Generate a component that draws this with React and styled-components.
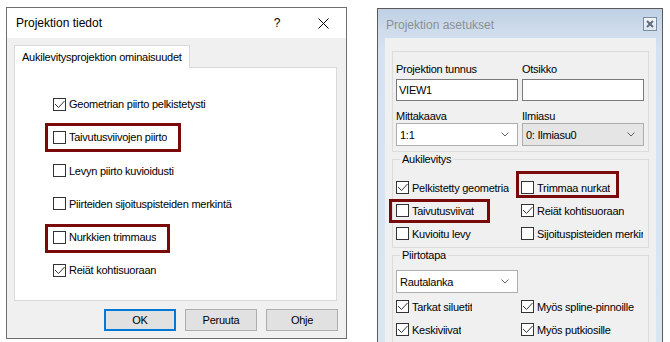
import React from 'react';
import styled, { createGlobalStyle } from 'styled-components';

const GlobalStyle = createGlobalStyle`
  html, body {
    margin: 0;
    padding: 0;
    background: #fff;
    overflow: hidden;
  }
  body {
    font-family: "Liberation Sans", Arial, sans-serif;
    font-size: 11px;
    letter-spacing: -0.25px;
    color: #000;
  }
`;

const Desktop = styled.div`
  display: flex;
  align-items: flex-start;
  gap: 30px;
  padding: 7px 0 0 6px;
  height: 342px;
  box-sizing: border-box;
`;

/* ---------- Windows 10 dialog (left) ---------- */

const Dialog = styled.section`
  width: 341px;
  height: 332px;
  box-sizing: border-box;
  border: 1px solid #6f6f6f;
  background: #f0f0f0;
  display: flex;
  flex-direction: column;
`;

const TitleBar = styled.header`
  height: 30px;
  background: #fff;
  display: flex;
  align-items: center;
  padding-left: 9px;
`;

const TitleText = styled.div`
  flex: 1;
  font-size: 12px;
  letter-spacing: 0;
`;

const CaptionButton = styled.div`
  width: 46px;
  height: 30px;
  display: flex;
  align-items: center;
  justify-content: center;
  font-size: 12px;
`;

const DialogBody = styled.div`
  flex: 1;
  display: flex;
  flex-direction: column;
  padding: 7px 9px 0 7px;
`;

const TabStrip = styled.div`
  display: flex;
`;

const Tab = styled.div`
  position: relative;
  z-index: 1;
  width: 176px;
  height: 23px;
  box-sizing: border-box;
  margin-bottom: -1px;
  padding: 0 7px;
  display: flex;
  align-items: center;
  background: #fff;
  border: 1px solid #d9d9d9;
  border-bottom: none;
  white-space: nowrap;
`;

const TabPanel = styled.div`
  height: 234px;
  box-sizing: border-box;
  background: #fff;
  border: 1px solid #d9d9d9;
  padding: 28px 0 0 38px;
  display: flex;
  flex-direction: column;
  align-items: flex-start;
  gap: 17.3px;
`;

const CheckRow = styled.label`
  position: relative;
  display: inline-flex;
  align-items: center;
  gap: 3px;
  height: ${(p) => p.$h || 16}px;
  max-width: ${(p) => p.$max || 300}px;
  white-space: nowrap;

  span {
    overflow: hidden;
  }

  ${(p) =>
    p.$mark &&
    `
    &::after {
      content: '';
      position: absolute;
      left: ${p.$mark.l}px;
      top: ${p.$mark.t}px;
      width: ${p.$mark.w}px;
      height: ${p.$mark.h}px;
      box-sizing: border-box;
      border: 3px solid #7a0a0a;
      pointer-events: none;
    }
  `}
`;

const Box = styled.span`
  flex: none;
  width: 13px;
  height: 13px;
  box-sizing: border-box;
  border: 1px solid #333;
  background: #fff;
  display: flex;
  align-items: center;
  justify-content: center;
`;

const ButtonRow = styled.div`
  display: flex;
  justify-content: flex-end;
  gap: 9px;
  margin-top: 8px;
  margin-right: -1px;
`;

const Button = styled.button`
  width: 72px;
  height: 22px;
  box-sizing: border-box;
  font: inherit;
  letter-spacing: inherit;
  color: #000;
  background: #e1e1e1;
  border: ${(p) => (p.$primary ? '2px solid #0078d7' : '1px solid #adadad')};
  padding: 0;
`;

/* ---------- Windows 7 basic dialog (right) ---------- */

const ClassicWindow = styled.section`
  width: 286px;
  height: 345px;
  box-sizing: border-box;
  margin-top: 1px;
  border: 1px solid #5b5b5b;
  background: linear-gradient(#bfd0e4 0px, #cddbeb 20px, #d6e2f0 40px, #dbe6f3 100%);
  display: flex;
  flex-direction: column;
`;

const ClassicTitle = styled.header`
  height: 29px;
  display: flex;
  align-items: center;
  padding: 0 5px 0 8px;
`;

const ClassicTitleText = styled.div`
  flex: 1;
  font-size: 12px;
  letter-spacing: 0;
  color: #8a8f96;
  padding-top: 2px;
`;

const ClassicClose = styled.div`
  width: 14px;
  height: 14px;
  box-sizing: border-box;
  border: 1px solid #7d8c9e;
  background: linear-gradient(#f3f6fa, #dfe7f1);
  display: flex;
  align-items: center;
  justify-content: center;
`;

const ClientArea = styled.div`
  flex: 1;
  margin: 0 6px 0 7px;
  background: #f0f0f0;
  padding: 13px 7px 0 7px;
  display: flex;
  flex-direction: column;
`;

const GroupBox = styled.fieldset`
  margin: 0;
  min-inline-size: 0;
  border: 1px solid #dcdcdc;
  padding: ${(p) => p.$pad};

  legend {
    padding: 0 2px;
    margin-left: 4px;
    line-height: 14px;
  }
`;

const FieldGrid = styled.div`
  display: grid;
  grid-template-columns: 122px 122px;
  column-gap: 4px;
`;

const FieldLabel = styled.div`
  line-height: 14px;
  margin-top: ${(p) => p.$top || 0}px;
  margin-bottom: ${(p) => p.$bottom || 0}px;
`;

const TextInput = styled.div`
  height: 22px;
  box-sizing: border-box;
  border: 1px solid #7a7a7a;
  background: #fff;
  padding: 0 2px;
  display: flex;
  align-items: center;
`;

const Combo = styled.div`
  width: 122px;
  height: 23px;
  box-sizing: border-box;
  border: 1px solid #adadad;
  background: ${(p) => (p.$readonly ? '#e5e5e5' : '#fff')};
  padding: 0 8px 0 3px;
  margin-bottom: ${(p) => p.$gap || 0}px;
  display: flex;
  align-items: center;
  justify-content: space-between;
`;

const CheckGrid = styled.div`
  display: grid;
  grid-template-columns: 122px 122px;
  column-gap: 3px;
  grid-auto-rows: 23px;
  align-items: center;
`;

const Check = () => (
  <svg width="11" height="11" viewBox="0 0 11 11">
    <path d="M1 5 L4.5 8.5 L10.5 2" fill="none" stroke="#333" strokeWidth="1" />
  </svg>
);

const Chevron = () => (
  <svg width="8" height="5" viewBox="0 0 8 5">
    <path d="M0.5 0.5 L4 4 L7.5 0.5" fill="none" stroke="#606060" strokeWidth="1" />
  </svg>
);

const CheckItem = ({ checked, label, mark, h, max }) => (
  <CheckRow $mark={mark} $h={h} $max={max}>
    <Box>{checked && <Check />}</Box>
    <span>{label}</span>
  </CheckRow>
);

const leftItems = [
  { label: 'Geometrian piirto pelkistetysti', checked: true },
  { label: 'Taivutusviivojen piirto', mark: { l: -8, t: -6.5, w: 136, h: 29 } },
  { label: 'Levyn piirto kuvioidusti' },
  { label: 'Piirteiden sijoituspisteiden merkintä' },
  { label: 'Nurkkien trimmaus', mark: { l: -8, t: -5.5, w: 125, h: 29 } },
  { label: 'Reiät kohtisuoraan', checked: true },
];

const unfoldItems = [
  { label: 'Pelkistetty geometria', checked: true },
  { label: 'Trimmaa nurkat', mark: { l: -5, t: -5.5, w: 103, h: 27 } },
  { label: 'Taivutusviivat', mark: { l: -7, t: -0.5, w: 101, h: 24 } },
  { label: 'Reiät kohtisuoraan', checked: true },
  { label: 'Kuvioitu levy' },
  { label: 'Sijoituspisteiden merkintä' },
];

const drawItems = [
  { label: 'Tarkat siluetit', checked: true },
  { label: 'Myös spline-pinnoille', checked: true },
  { label: 'Keskiviivat', checked: true },
  { label: 'Myös putkiosille', checked: true },
];

export default function App() {
  return (
    <>
      <GlobalStyle />
      <Desktop>
        <Dialog>
          <TitleBar>
            <TitleText>Projektion tiedot</TitleText>
            <CaptionButton>?</CaptionButton>
            <CaptionButton>
              <svg width="11" height="11" viewBox="0 0 11 11">
                <path d="M0.5 0.5 L10.5 10.5 M10.5 0.5 L0.5 10.5" stroke="#000" strokeWidth="1" />
              </svg>
            </CaptionButton>
          </TitleBar>
          <DialogBody>
            <TabStrip>
              <Tab>Aukilevitysprojektion ominaisuudet</Tab>
            </TabStrip>
            <TabPanel>
              {leftItems.map((it) => (
                <CheckItem key={it.label} {...it} />
              ))}
            </TabPanel>
            <ButtonRow>
              <Button $primary>OK</Button>
              <Button>Peruuta</Button>
              <Button>Ohje</Button>
            </ButtonRow>
          </DialogBody>
        </Dialog>

        <ClassicWindow>
          <ClassicTitle>
            <ClassicTitleText>Projektion asetukset</ClassicTitleText>
            <ClassicClose>
              <svg width="8" height="8" viewBox="0 0 8 8">
                <path d="M1 1 L7 7 M7 1 L1 7" stroke="#5d6b7c" strokeWidth="2" />
              </svg>
            </ClassicClose>
          </ClassicTitle>
          <ClientArea>
            <GroupBox $pad="10px 3px 5px">
              <FieldGrid>
                <FieldLabel $bottom={3}>Projektion tunnus</FieldLabel>
                <FieldLabel $bottom={3}>Otsikko</FieldLabel>
                <TextInput>VIEW1</TextInput>
                <TextInput />
                <FieldLabel $top={8}>Mittakaava</FieldLabel>
                <FieldLabel $top={8}>Ilmiasu</FieldLabel>
                <Combo>
                  1:1 <Chevron />
                </Combo>
                <Combo $readonly>
                  0: Ilmiasu0 <Chevron />
                </Combo>
              </FieldGrid>
            </GroupBox>
            <GroupBox $pad="10px 3px 2px">
              <legend>Aukilevitys</legend>
              <CheckGrid>
                {unfoldItems.map((it) => (
                  <CheckItem key={it.label} {...it} h={23} max={122} />
                ))}
              </CheckGrid>
            </GroupBox>
            <GroupBox $pad="8px 3px 2px">
              <legend>Piirtotapa</legend>
              <Combo $gap={2}>
                Rautalanka <Chevron />
              </Combo>
              <CheckGrid>
                {drawItems.map((it) => (
                  <CheckItem key={it.label} {...it} h={23} max={122} />
                ))}
              </CheckGrid>
            </GroupBox>
          </ClientArea>
        </ClassicWindow>
      </Desktop>
    </>
  );
}
